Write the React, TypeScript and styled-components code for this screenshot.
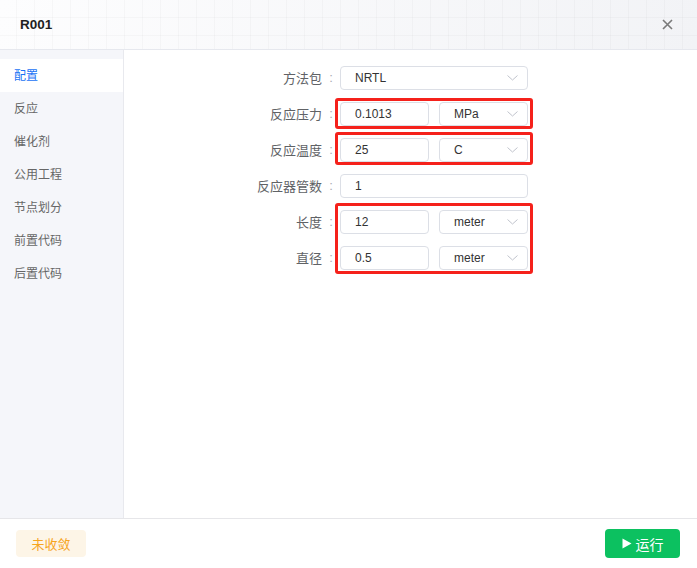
import React from 'react';
import styled, { createGlobalStyle } from 'styled-components';

const GlobalStyle = createGlobalStyle`
  html, body { margin: 0; padding: 0; background: #fff; }
  body { font-family: "Liberation Sans", "Noto Sans CJK SC", sans-serif; }
  * { box-sizing: border-box; }
`;

const Dialog = styled.div`
  width: 697px;
  height: 568px;
  display: flex;
  flex-direction: column;
  background: #fff;
  overflow: hidden;
`;

const Header = styled.header`
  height: 50px;
  flex: none;
  display: flex;
  align-items: center;
  justify-content: space-between;
  padding: 0 24px 1px 20px;
  border-bottom: 1px solid #e6e8ee;
  background:
    linear-gradient(rgba(0, 0, 0, 0.022) 1px, transparent 1px) 0 -1px / 18px 18px,
    linear-gradient(90deg, rgba(0, 0, 0, 0.022) 1px, transparent 1px) -2px 0 / 18px 18px,
    linear-gradient(100deg, #fdfdfe 0%, #f2f3f6 100%);
`;

const Title = styled.h1`
  margin: 0;
  font-size: 13.5px;
  font-weight: 700;
  color: #1f1f1f;
`;

const CloseButton = styled.button`
  border: none;
  background: transparent;
  padding: 0;
  width: 11px;
  height: 11px;
  display: flex;
  cursor: pointer;
`;

const Body = styled.div`
  flex: 1;
  display: flex;
  min-height: 0;
`;

const Sidebar = styled.nav`
  width: 124px;
  flex: none;
  background: #f5f6fa;
  border-right: 1px solid #e8e9ee;
  padding-top: 9px;
  display: flex;
  flex-direction: column;
`;

const NavItem = styled.div<{ $active?: boolean }>`
  height: 33px;
  line-height: 34px;
  padding-left: 14px;
  font-size: 12px;
  color: ${(p) => (p.$active ? '#1a73f5' : '#666')};
  background: ${(p) => (p.$active ? '#fff' : 'transparent')};
  cursor: pointer;
`;

const Content = styled.main`
  flex: 1;
  padding: 16px 0 0 98px;
`;

const Form = styled.div`
  display: flex;
  flex-direction: column;
  gap: 12px;
  width: 306px;
`;

const Group = styled.div`
  position: relative;
  display: flex;
  flex-direction: column;
  gap: 12px;
`;

const Annot = styled.div<{ $top: number; $bottom: number }>`
  position: absolute;
  left: 113px;
  right: -5px;
  top: ${(p) => -p.$top}px;
  bottom: ${(p) => -p.$bottom}px;
  border: 3px solid #f5211b;
  border-radius: 3px;
  pointer-events: none;
`;

const Row = styled.div`
  display: flex;
  align-items: center;
  height: 24px;
`;

const Label = styled.label`
  width: 100px;
  text-align: right;
  font-size: 13px;
  color: #606266;
  margin-bottom: 2px;
`;

const Colon = styled.span`
  width: 18px;
  text-align: center;
  font-size: 13px;
  color: #a8abb2;
  margin-bottom: 2px;
`;

const Controls = styled.div`
  width: 188px;
  display: flex;
  gap: 10px;
`;

const Field = styled.div`
  flex: 1;
  height: 24px;
  border: 1px solid #dcdfe6;
  border-radius: 4px;
  display: flex;
  align-items: center;
  justify-content: space-between;
  padding: 0 9px 0 14px;
  font-size: 12px;
  color: #333;
  background: #fff;
`;

const Footer = styled.footer`
  height: 50px;
  flex: none;
  border-top: 1px solid #e6e6e9;
  display: flex;
  align-items: center;
  justify-content: space-between;
  padding: 0 17px 0 16px;
`;

const StatusBadge = styled.span`
  width: 70px;
  height: 27px;
  border-radius: 4px;
  background: #fdf5e7;
  color: #f7a51f;
  font-size: 13px;
  display: flex;
  align-items: center;
  justify-content: center;
`;

const RunButton = styled.button`
  width: 75px;
  height: 29px;
  border: none;
  border-radius: 4px;
  background: #0cc160;
  color: #fff;
  font-family: inherit;
  font-size: 14px;
  display: flex;
  align-items: center;
  justify-content: center;
  gap: 4px;
  padding: 0;
  cursor: pointer;
`;

const Chevron = () => (
  <svg width="11" height="6" viewBox="0 0 11 6" fill="none">
    <polyline points="0.5,0.5 5.5,5 10.5,0.5" stroke="#c0c4cc" strokeWidth="1" />
  </svg>
);

const Input = ({ value }: { value: string }) => <Field>{value}</Field>;

const Select = ({ value }: { value: string }) => (
  <Field>
    <span>{value}</span>
    <Chevron />
  </Field>
);

const navItems = ['配置', '反应', '催化剂', '公用工程', '节点划分', '前置代码', '后置代码'];

export default function App() {
  return (
    <Dialog>
      <GlobalStyle />
      <Header>
        <Title>R001</Title>
        <CloseButton aria-label="close">
          <svg width="11" height="11" viewBox="0 0 11 11">
            <path d="M1 1 L10 10 M10 1 L1 10" stroke="#7a7a7a" strokeWidth="1.6" />
          </svg>
        </CloseButton>
      </Header>
      <Body>
        <Sidebar>
          {navItems.map((n, i) => (
            <NavItem key={n} $active={i === 0}>
              {n}
            </NavItem>
          ))}
        </Sidebar>
        <Content>
          <Form>
            <Row>
              <Label>方法包</Label>
              <Colon>:</Colon>
              <Controls>
                <Select value="NRTL" />
              </Controls>
            </Row>
            <Group>
              <Annot $top={4} $bottom={3} />
              <Row>
                <Label>反应压力</Label>
                <Colon>:</Colon>
                <Controls>
                  <Input value="0.1013" />
                  <Select value="MPa" />
                </Controls>
              </Row>
            </Group>
            <Group>
              <Annot $top={6} $bottom={3} />
              <Row>
                <Label>反应温度</Label>
                <Colon>:</Colon>
                <Controls>
                  <Input value="25" />
                  <Select value="C" />
                </Controls>
              </Row>
            </Group>
            <Row>
              <Label>反应器管数</Label>
              <Colon>:</Colon>
              <Controls>
                <Input value="1" />
              </Controls>
            </Row>
            <Group>
              <Annot $top={7} $bottom={4} />
              <Row>
                <Label>长度</Label>
                <Colon>:</Colon>
                <Controls>
                  <Input value="12" />
                  <Select value="meter" />
                </Controls>
              </Row>
              <Row>
                <Label>直径</Label>
                <Colon>:</Colon>
                <Controls>
                  <Input value="0.5" />
                  <Select value="meter" />
                </Controls>
              </Row>
            </Group>
          </Form>
        </Content>
      </Body>
      <Footer>
        <StatusBadge>未收敛</StatusBadge>
        <RunButton>
          <svg width="10" height="11" viewBox="0 0 10 11">
            <path d="M0.5 0.5 L9.5 5.5 L0.5 10.5 Z" fill="#fff" />
          </svg>
          运行
        </RunButton>
      </Footer>
    </Dialog>
  );
}
